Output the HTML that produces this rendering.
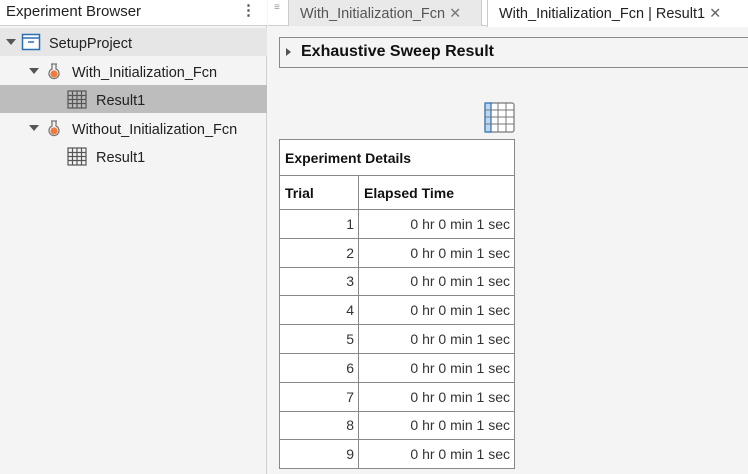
<!DOCTYPE html>
<html><head><style>
*{box-sizing:border-box;margin:0;padding:0}
body{width:748px;height:474px;overflow:hidden;background:#f4f4f4;font-family:"Segoe UI","Liberation Sans",sans-serif;color:#212121;position:relative;font-size:14px}
.abs{position:absolute}
.left{left:0;top:0;width:267px;height:474px;background:#f4f4f4;border-right:1px solid #cfcfcf}
.hdr{left:0;top:0;width:267px;height:26px;background:#fff;border-bottom:1px solid #cfcfcf;font-size:15px;padding:3px 0 0 6px}
.row{left:0;width:267px;height:28px;font-size:14.5px;line-height:28px}
.row span{top:2px}
.tri{width:0;height:0;border-left:5px solid transparent;border-right:5px solid transparent;border-top:6px solid #555}
.tab{top:0;height:26px;font-size:14.5px;line-height:28px;color:#333;white-space:nowrap;overflow:hidden}
td{border:1px solid #888;font-size:14px;height:28.8px;padding:0 4px;text-align:right;color:#333}
th{border:1px solid #888;font-size:14px;text-align:left;padding:0 5px;font-weight:bold;color:#111}
</style></head><body>
<div class="abs left"></div>
<div class="abs hdr">Experiment Browser<span style="position:absolute;left:241px;top:1px;font-weight:bold;color:#555">⋮</span></div>
<div class="abs row" style="top:28px;background:#e6e6e6"><div class="abs tri" style="left:6px;top:11px"></div>
<svg class="abs" style="left:21px;top:4px" width="20" height="20"><rect x="1.5" y="2.5" width="17" height="15" fill="#fff" stroke="#2a6fb6" stroke-width="1.5"/><line x1="1.5" y1="6" x2="18.5" y2="6" stroke="#2a6fb6" stroke-width="1.5"/><line x1="7" y1="10" x2="13" y2="10" stroke="#2a6fb6" stroke-width="1.5"/></svg>
<span class="abs" style="left:49px">SetupProject</span></div>
<div class="abs row" style="top:57px"><div class="abs tri" style="left:29px;top:11px"></div>
<svg class="abs" style="left:47px;top:5px" width="14" height="18"><path d="M4 2h6M5 2v5a5 5 0 1 0 4 0V2" fill="none" stroke="#777" stroke-width="1.3"/><circle cx="7" cy="12" r="3.6" fill="#f07c3c"/></svg>
<span class="abs" style="left:72px">With_Initialization_Fcn</span></div>
<div class="abs row" style="top:85px;background:#bdbdbd">
<svg class="abs" style="left:67px;top:5px" width="20" height="19"><g fill="none" stroke="#555" stroke-width="1.2"><rect x="1" y="1" width="18" height="17"/><path d="M5.5 1v17M10 1v17M14.5 1v17M1 5.5h18M1 9.5h18M1 13.5h18"/></g></svg>
<span class="abs" style="left:96px">Result1</span></div>
<div class="abs row" style="top:114px"><div class="abs tri" style="left:29px;top:11px"></div>
<svg class="abs" style="left:47px;top:5px" width="14" height="18"><path d="M4 2h6M5 2v5a5 5 0 1 0 4 0V2" fill="none" stroke="#777" stroke-width="1.3"/><circle cx="7" cy="12" r="3.6" fill="#f07c3c"/></svg>
<span class="abs" style="left:72px">Without_Initialization_Fcn</span></div>
<div class="abs row" style="top:142px">
<svg class="abs" style="left:67px;top:5px" width="20" height="19"><g fill="none" stroke="#555" stroke-width="1.2"><rect x="1" y="1" width="18" height="17"/><path d="M5.5 1v17M10 1v17M14.5 1v17M1 5.5h18M1 9.5h18M1 13.5h18"/></g></svg>
<span class="abs" style="left:96px">Result1</span></div>

<div class="abs" style="left:268px;top:0;width:480px;height:26px;background:#fff;border-bottom:1px solid #cfcfcf"></div>
<div class="abs" style="left:274px;top:5px;font-size:10px;color:#999;line-height:5px">≡</div>
<div class="abs tab" style="left:288px;width:194px;background:#e9e9e9;border-left:1px solid #ccc;border-right:1px solid #ccc;padding-left:11px;color:#555">With_Initialization_Fcn <span style="color:#777">✕</span></div>
<div class="abs tab" style="left:487px;width:261px;height:27px;background:#fff;border-left:1px solid #ccc;padding-left:11px;color:#222">With_Initialization_Fcn | Result1 <span style="color:#666">✕</span></div>

<div class="abs" style="left:279px;top:37px;width:475px;height:31px;border:1px solid #888;background:#f4f4f4"></div>
<div class="abs" style="left:286px;top:48px;width:0;height:0;border-top:4px solid transparent;border-bottom:4px solid transparent;border-left:5px solid #555"></div>
<div class="abs" style="left:301px;top:43px;font-weight:bold;font-size:16px;color:#111">Exhaustive Sweep Result</div>

<svg class="abs" style="left:484px;top:102px" width="31" height="31"><rect x="1" y="1" width="29" height="29" rx="2" fill="#fff" stroke="#777" stroke-width="1.2"/><rect x="1" y="1" width="6" height="29" fill="#bcd6f0" stroke="#2a6fb6" stroke-width="1.2"/><g stroke="#777" stroke-width="1"><path d="M14 1v29M22 1v29M1 8h29M1 15h29M1 22h29"/></g></svg>

<table class="abs" style="left:279px;top:139px;width:236px;border-collapse:collapse;background:#fff">
<tr><th colspan="2" style="height:36px">Experiment Details</th></tr>
<tr><th style="height:34px;width:79px">Trial</th><th>Elapsed Time</th></tr>
<tr><td>1</td><td>0 hr 0 min 1 sec</td></tr>
<tr><td>2</td><td>0 hr 0 min 1 sec</td></tr>
<tr><td>3</td><td>0 hr 0 min 1 sec</td></tr>
<tr><td>4</td><td>0 hr 0 min 1 sec</td></tr>
<tr><td>5</td><td>0 hr 0 min 1 sec</td></tr>
<tr><td>6</td><td>0 hr 0 min 1 sec</td></tr>
<tr><td>7</td><td>0 hr 0 min 1 sec</td></tr>
<tr><td>8</td><td>0 hr 0 min 1 sec</td></tr>
<tr><td>9</td><td>0 hr 0 min 1 sec</td></tr>
</table>
</body></html>
